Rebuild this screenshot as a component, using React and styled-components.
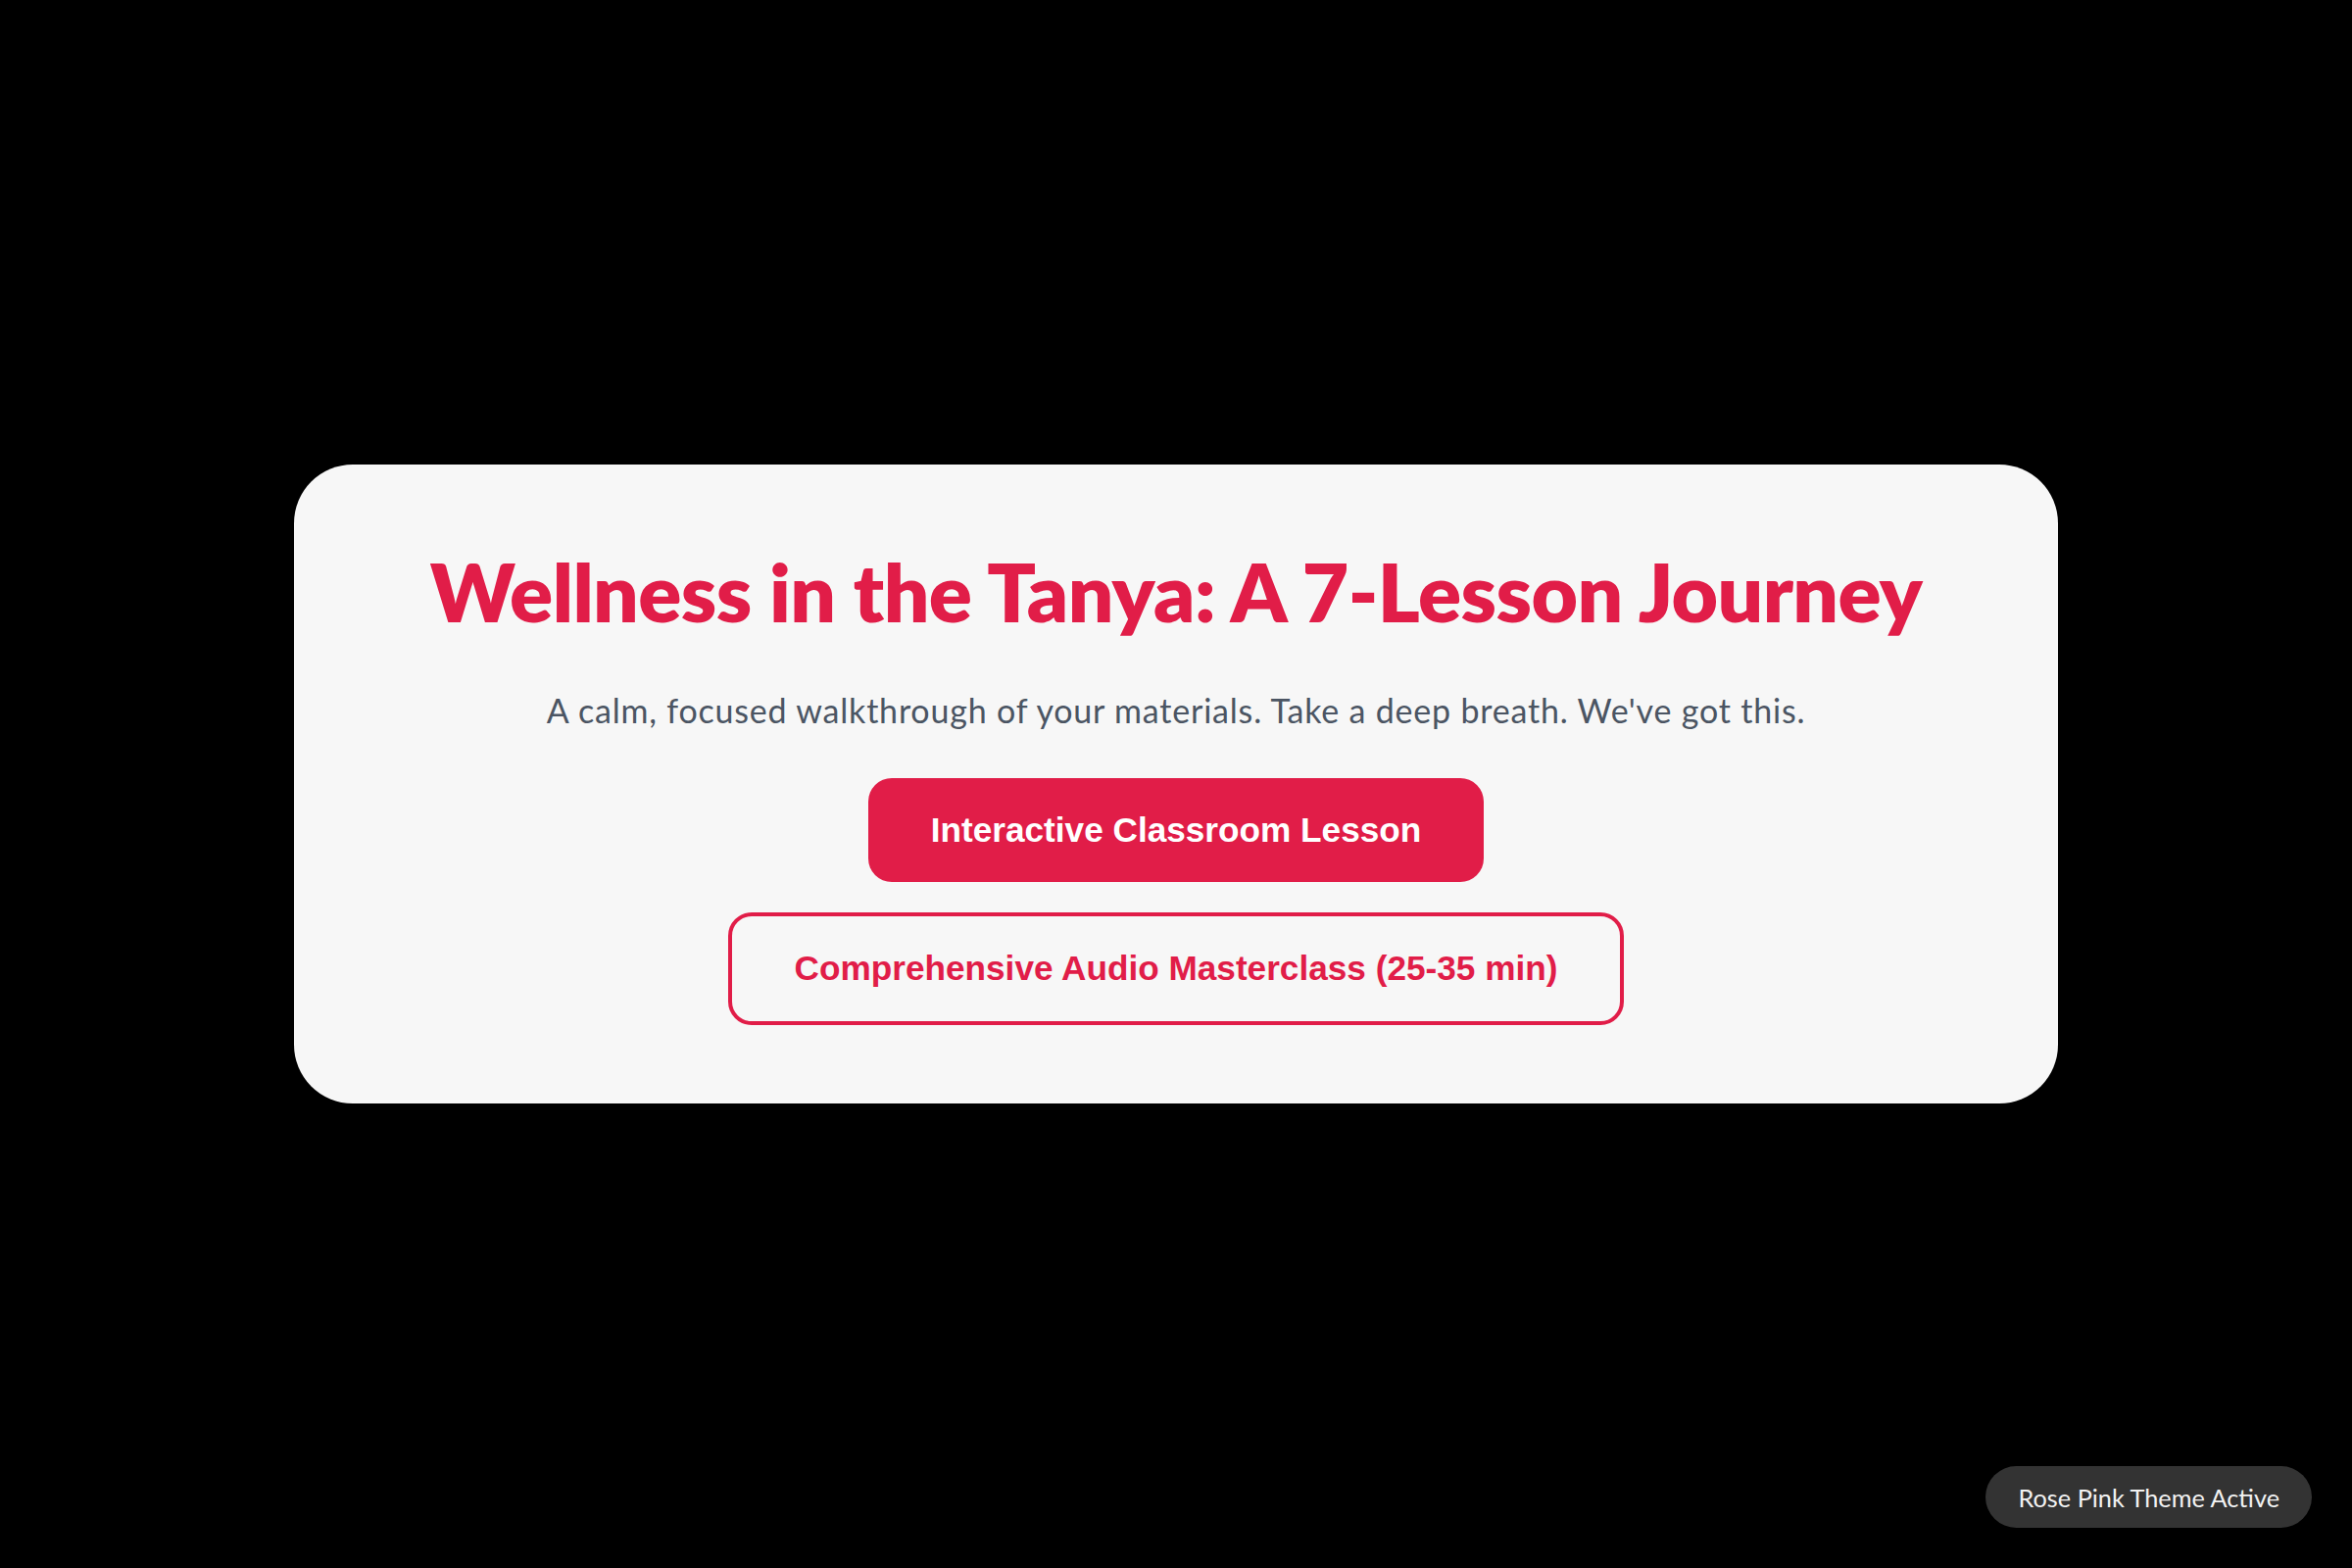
import React from "react";
import styled, { createGlobalStyle } from "styled-components";

const GlobalStyle = createGlobalStyle`
  * { box-sizing: border-box; }
  html, body {
    margin: 0;
    padding: 0;
    background: #000;
  }
  body {
    font-family: Lato, "Noto Sans", sans-serif;
  }
`;

const Page = styled.main`
  min-height: 100vh;
  display: flex;
  align-items: center;
  justify-content: center;
`;

const Card = styled.section`
  width: 1800px;
  background: #f7f7f7;
  border-radius: 60px;
  padding: 80px;
  display: flex;
  flex-direction: column;
  align-items: center;
  text-align: center;
`;

const Title = styled.h1`
  margin: 0;
  color: #e11d48;
  font-family: Lato, sans-serif;
  font-weight: 800;
  font-size: 82px;
  line-height: 1.2;
  letter-spacing: -0.6px;
`;

const Subtitle = styled.p`
  margin: 48px 0 46px;
  color: #4b5563;
  font-size: 34px;
  line-height: 1.4;
  letter-spacing: 0.8px;
`;

const Actions = styled.div`
  display: flex;
  flex-direction: column;
  align-items: center;
  gap: 31px;
`;

const Button = styled.button`
  font-family: "Liberation Sans", Arial, sans-serif;
  font-weight: 700;
  font-size: 35.2px;
  line-height: 1.2;
  padding: 32px 64px;
  border-radius: 24px;
  cursor: pointer;
  color: ${(p) => (p.$outline ? "#e11d48" : "#fff")};
  background: ${(p) => (p.$outline ? "transparent" : "#e11d48")};
  border: ${(p) => (p.$outline ? "4px solid #e11d48" : "none")};
`;

const Badge = styled.div`
  position: fixed;
  right: 41px;
  bottom: 41px;
  height: 63px;
  padding: 0 33px;
  display: flex;
  align-items: center;
  border-radius: 999px;
  background: #333;
  color: #f2f2f2;
  font-size: 25.3px;
`;

export default function App() {
  return (
    <>
      <GlobalStyle />
      <Page>
        <Card>
          <Title>Wellness in the Tanya: A 7-Lesson Journey</Title>
          <Subtitle>
            A calm, focused walkthrough of your materials. Take a deep breath.
            We've got this.
          </Subtitle>
          <Actions>
            <Button>Interactive Classroom Lesson</Button>
            <Button $outline>Comprehensive Audio Masterclass (25-35 min)</Button>
          </Actions>
        </Card>
      </Page>
      <Badge>Rose Pink Theme Active</Badge>
    </>
  );
}
